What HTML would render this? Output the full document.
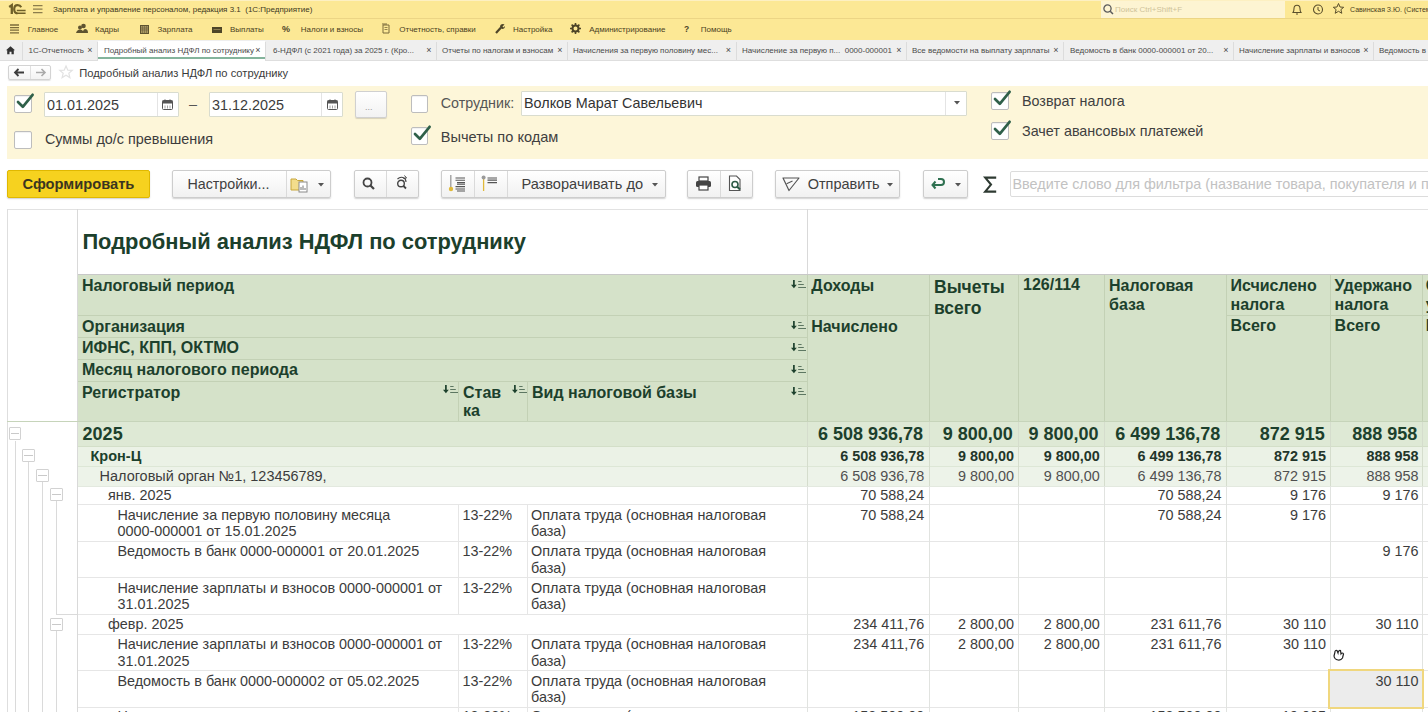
<!DOCTYPE html>
<html><head><meta charset="utf-8">
<style>
*{box-sizing:border-box;margin:0;padding:0}
html,body{width:1428px;height:712px;overflow:hidden;background:#fff;font-family:"Liberation Sans",sans-serif;color:#333}
body{position:relative}
.a{position:absolute;white-space:nowrap}
svg{position:absolute;overflow:visible}
</style></head><body>

<div class="a" style="left:0px;top:0px;width:1428px;height:18.5px;background:#fce895"></div>
<div class="a" style="left:0px;top:0px;width:1428px;height:1px;background:#fdf0c2"></div>
<div class="a" style="left:0px;top:18px;width:1428px;height:1px;background:#ecd585"></div>
<div class="a" style="left:0px;top:19.3px;width:1428px;height:21.5px;background:#fce895"></div>
<svg style="left:8px;top:3.5px" width="18" height="11" viewBox="0 0 18 11"><path d="M1.2 3 L3.8 1.2 V10" fill="none" stroke="#6e5f28" stroke-width="2.3"/><path d="M13.2 3.2 Q12.2 1.2 9.6 1.2 Q6.2 1.2 6.2 5.3 Q6.2 9.2 9.4 9.4" fill="none" stroke="#6e5f28" stroke-width="2.2"/><path d="M8.8 6.6 H17.6 M8.8 9.2 H17.6" stroke="#6e5f28" stroke-width="1.5"/></svg>
<svg style="left:33px;top:5px" width="10" height="9"><path d="M0 .7H9.5M0 4.2H9.5M0 7.7H9.5" stroke="#8c7d4c" stroke-width="1.2"/></svg>
<div class="a" style="left:53px;top:6px;font-size:8px;line-height:8px;color:#40381e;font-weight:400;">Зарплата и управление персоналом, редакция 3.1&nbsp; (1С:Предприятие)</div>
<div class="a" style="left:1101px;top:0.5px;width:184px;height:17.5px;background:#fdf4d2"></div>
<svg style="left:1103px;top:4px" width="11" height="11"><circle cx="4.5" cy="4.5" r="3.6" fill="none" stroke="#5a5a5a" stroke-width="1.3"/><path d="M7.2 7.2L10 10" stroke="#5a5a5a" stroke-width="1.5"/></svg>
<div class="a" style="left:1115px;top:6px;font-size:8px;line-height:8px;color:#cfc39a;font-weight:400;">Поиск Ctrl+Shift+F</div>
<svg style="left:1291px;top:3px" width="12" height="13"><path d="M2 9.5 Q3 8 3 5.5 Q3 2.2 6 2.2 Q9 2.2 9 5.5 Q9 8 10 9.5 Z" fill="none" stroke="#5a4f2c" stroke-width="1.1"/><path d="M5 11h2" stroke="#5a4f2c" stroke-width="1.2"/></svg>
<svg style="left:1312px;top:3px" width="13" height="13"><circle cx="6" cy="6.5" r="4.5" fill="none" stroke="#5a4f2c" stroke-width="1.1"/><path d="M6 4v3l2 1" fill="none" stroke="#5a4f2c" stroke-width="1"/></svg>
<svg style="left:1332px;top:2px" width="13" height="13"><path d="M6.5 1.5 L8 5 L11.7 5.3 L8.9 7.6 L9.8 11.3 L6.5 9.3 L3.2 11.3 L4.1 7.6 L1.3 5.3 L5 5 Z" fill="none" stroke="#5a4f2c" stroke-width="1"/></svg>
<div class="a" style="left:1350px;top:6px;font-size:7px;line-height:7px;color:#4a4122;font-weight:400;">Савинская З.Ю. (Система</div>
<svg style="left:10px;top:24px" width="10" height="10"><path d="M0 1H9M0 3.6H9M0 6.2H9M0 8.8H9" stroke="#7b6b3a" stroke-width="1.3"/></svg>
<div class="a" style="left:27.7px;top:26px;font-size:8px;line-height:8px;color:#4a4122;font-weight:400;">Главное</div>
<svg style="left:76px;top:23px" width="12" height="11"><circle cx="7.5" cy="3" r="2.3" fill="#5e5330"/><circle cx="4" cy="4.5" r="2" fill="#5e5330"/><path d="M0 10 Q1 6.5 4 6.5 Q6 6.5 7 8 Q8 6 9 6 Q12 6 12 10Z" fill="#5e5330"/></svg>
<div class="a" style="left:95px;top:26px;font-size:8px;line-height:8px;color:#4a4122;font-weight:400;">Кадры</div>
<svg style="left:140px;top:25px" width="9" height="9"><rect x=".5" y=".5" width="8" height="8" fill="#a89860" stroke="#5e5330"/><path d="M2.5 1v7M4.5 1v7M6.5 1v7M1 3h7M1 5h7" stroke="#6b6040" stroke-width=".6"/></svg>
<div class="a" style="left:157.5px;top:26px;font-size:8px;line-height:8px;color:#4a4122;font-weight:400;">Зарплата</div>
<svg style="left:212px;top:26.5px" width="10" height="6"><rect x="0" y="0" width="10" height="6" fill="#4e4528"/><path d="M1.5 2.5h7" stroke="#9c8c5a" stroke-width=".8"/></svg>
<div class="a" style="left:230px;top:26px;font-size:8px;line-height:8px;color:#4a4122;font-weight:400;">Выплаты</div>
<div class="a" style="left:282px;top:25px;font-size:9px;line-height:9px;color:#4e4528;font-weight:700;">%</div>
<div class="a" style="left:300.8px;top:26px;font-size:8px;line-height:8px;color:#4a4122;font-weight:400;">Налоги и взносы</div>
<svg style="left:381px;top:23px" width="9" height="11"><path d="M2 2h6v8H2z M1 1h5" fill="none" stroke="#7b6b3a" stroke-width="1"/><path d="M3.5 4.5h3M3.5 6.5h3" stroke="#7b6b3a" stroke-width=".8"/></svg>
<div class="a" style="left:399.3px;top:26px;font-size:8px;line-height:8px;color:#4a4122;font-weight:400;">Отчетность, справки</div>
<svg style="left:495px;top:23px" width="10" height="11"><path d="M1 10 L6 4.5" stroke="#4e4528" stroke-width="2.2"/><path d="M5 4 Q5 1 8 1 L9.5 1.5 L7.5 3.5 L8.5 4.5 L10 3 Q10 6 7 6Z" fill="#4e4528"/></svg>
<div class="a" style="left:513px;top:26px;font-size:8px;line-height:8px;color:#4a4122;font-weight:400;">Настройка</div>
<svg style="left:570px;top:23px" width="11" height="11"><circle cx="5.5" cy="5.5" r="3" fill="none" stroke="#4e4528" stroke-width="2"/><path d="M5.5 0v2.5M5.5 8.5V11M0 5.5h2.5M8.5 5.5H11M1.6 1.6l1.8 1.8M7.6 7.6l1.8 1.8M1.6 9.4l1.8-1.8M7.6 3.4l1.8-1.8" stroke="#4e4528" stroke-width="1.6"/></svg>
<div class="a" style="left:589.2px;top:26px;font-size:8px;line-height:8px;color:#4a4122;font-weight:400;">Администрирование</div>
<div class="a" style="left:684px;top:25px;font-size:8.5px;line-height:8.5px;color:#4e4528;font-weight:700;">?</div>
<div class="a" style="left:700.8px;top:26px;font-size:8px;line-height:8px;color:#4a4122;font-weight:400;">Помощь</div>
<div class="a" style="left:0px;top:40.3px;width:1428px;height:20px;background:#efefef"></div>
<div class="a" style="left:0px;top:60.2px;width:1428px;height:1px;background:#dedede"></div>
<div class="a" style="left:21.5px;top:41.5px;width:1px;height:18.5px;background:#dcdcdc"></div>
<div class="a" style="left:97px;top:41.5px;width:1px;height:18.5px;background:#dcdcdc"></div>
<div class="a" style="left:28.5px;top:47px;font-size:8px;line-height:8px;color:#4a4a4a;font-weight:400;">1С-Отчетность</div>
<div class="a" style="left:87.2px;top:46px;font-size:9px;line-height:9px;color:#4a4a4a;font-weight:400;">×</div>
<div class="a" style="left:97.5px;top:40.8px;width:167.5px;height:19.8px;background:#fff"></div>
<div class="a" style="left:97.5px;top:57px;width:167.5px;height:2px;background:#84b49c"></div>
<div class="a" style="left:265px;top:41.5px;width:1px;height:18.5px;background:#dcdcdc"></div>
<div class="a" style="left:104px;top:47px;font-size:8px;line-height:8px;color:#4a4a4a;font-weight:400;">Подробный анализ НДФЛ по сотруднику</div>
<div class="a" style="left:255.2px;top:46px;font-size:9px;line-height:9px;color:#4a4a4a;font-weight:400;">×</div>
<div class="a" style="left:436px;top:41.5px;width:1px;height:18.5px;background:#dcdcdc"></div>
<div class="a" style="left:273px;top:47px;font-size:8px;line-height:8px;color:#4a4a4a;font-weight:400;">6-НДФЛ (с 2021 года) за 2025 г. (Кро...</div>
<div class="a" style="left:426.2px;top:46px;font-size:9px;line-height:9px;color:#4a4a4a;font-weight:400;">×</div>
<div class="a" style="left:567px;top:41.5px;width:1px;height:18.5px;background:#dcdcdc"></div>
<div class="a" style="left:442px;top:47px;font-size:8px;line-height:8px;color:#4a4a4a;font-weight:400;">Отчеты по налогам и взносам</div>
<div class="a" style="left:557.2px;top:46px;font-size:9px;line-height:9px;color:#4a4a4a;font-weight:400;">×</div>
<div class="a" style="left:735.6px;top:41.5px;width:1px;height:18.5px;background:#dcdcdc"></div>
<div class="a" style="left:573px;top:47px;font-size:8px;line-height:8px;color:#4a4a4a;font-weight:400;">Начисления за первую половину мес...</div>
<div class="a" style="left:725.8000000000001px;top:46px;font-size:9px;line-height:9px;color:#4a4a4a;font-weight:400;">×</div>
<div class="a" style="left:906px;top:41.5px;width:1px;height:18.5px;background:#dcdcdc"></div>
<div class="a" style="left:742px;top:47px;font-size:8px;line-height:8px;color:#4a4a4a;font-weight:400;">Начисление за первую п...&nbsp; 0000-000001</div>
<div class="a" style="left:896.2px;top:46px;font-size:9px;line-height:9px;color:#4a4a4a;font-weight:400;">×</div>
<div class="a" style="left:1063px;top:41.5px;width:1px;height:18.5px;background:#dcdcdc"></div>
<div class="a" style="left:912px;top:47px;font-size:8px;line-height:8px;color:#4a4a4a;font-weight:400;">Все ведомости на выплату зарплаты</div>
<div class="a" style="left:1053.2px;top:46px;font-size:9px;line-height:9px;color:#4a4a4a;font-weight:400;">×</div>
<div class="a" style="left:1233px;top:41.5px;width:1px;height:18.5px;background:#dcdcdc"></div>
<div class="a" style="left:1070px;top:47px;font-size:8px;line-height:8px;color:#4a4a4a;font-weight:400;">Ведомость в банк 0000-000001 от 20...</div>
<div class="a" style="left:1223.2px;top:46px;font-size:9px;line-height:9px;color:#4a4a4a;font-weight:400;">×</div>
<div class="a" style="left:1373px;top:41.5px;width:1px;height:18.5px;background:#dcdcdc"></div>
<div class="a" style="left:1239px;top:47px;font-size:8px;line-height:8px;color:#4a4a4a;font-weight:400;">Начисление зарплаты и взносов</div>
<div class="a" style="left:1363.2px;top:46px;font-size:9px;line-height:9px;color:#4a4a4a;font-weight:400;">×</div>
<div class="a" style="left:1500px;top:41.5px;width:1px;height:18.5px;background:#dcdcdc"></div>
<div class="a" style="left:1379px;top:47px;font-size:8px;line-height:8px;color:#4a4a4a;font-weight:400;">Ведомость в банк 0000-000002 от 05.02.2025</div>
<svg style="left:6px;top:45.5px" width="9" height="9"><path d="M0 4.2 L4.5 0.3 L9 4.2 L7.8 4.2 L7.8 8.3 L5.5 8.3 L5.5 5.8 L3.5 5.8 L3.5 8.3 L1.2 8.3 L1.2 4.2Z" fill="#333"/></svg>
<div class="a" style="left:7.5px;top:65.4px;width:43.5px;height:14.3px;background:linear-gradient(#fff,#f3f3f3);border:1px solid #d3d3d3;border-radius:2px;box-shadow:0 1px 1px rgba(0,0,0,.12)"></div>
<div class="a" style="left:30px;top:66px;width:1px;height:13px;background:#e0e0e0"></div>
<svg style="left:13px;top:68px" width="12" height="9"><path d="M11 4.5H2M5.5 1L2 4.5L5.5 8" fill="none" stroke="#3c3c3c" stroke-width="1.8"/></svg>
<svg style="left:35px;top:68px" width="12" height="9"><path d="M1 4.5H10M6.5 1L10 4.5L6.5 8" fill="none" stroke="#aaaaaa" stroke-width="1.6"/></svg>
<svg style="left:59px;top:65px" width="14" height="14"><path d="M7 1 L8.8 5.2 L13.2 5.4 L9.8 8.2 L10.9 12.6 L7 10.2 L3.1 12.6 L4.2 8.2 L0.8 5.4 L5.2 5.2 Z" fill="none" stroke="#e2e2e2" stroke-width="1.2"/></svg>
<div class="a" style="left:79.3px;top:68px;font-size:11.15px;line-height:11.15px;color:#3a3a3a;font-weight:400;">Подробный анализ НДФЛ по сотруднику</div>
<div class="a" style="left:7px;top:85.5px;width:1421px;height:73.8px;background:#fdf6d9"></div>
<div class="a" style="left:14px;top:95px;width:17.5px;height:18px;background:#fff;border:1px solid #bdbdbd;border-radius:2px;box-shadow:inset 0 1px 1px rgba(0,0,0,.06)"></div>
<svg style="left:14px;top:92px" width="22" height="22"><path d="M4 10 L8.8 14.8 L18.6 2.8" fill="none" stroke="#2f6049" stroke-width="2.7" stroke-linecap="round" stroke-linejoin="round"/></svg>
<div class="a" style="left:43.8px;top:92.3px;width:134.8px;height:25.200000000000003px;background:#fff;border:1px solid #d9dccf;border-radius:1px"></div>
<div class="a" style="left:156.5px;top:93.3px;width:1px;height:23.200000000000003px;background:#e4e4e4"></div>
<div class="a" style="left:47px;top:98px;font-size:14.4px;line-height:14.4px;color:#3c3c3c;font-weight:400;">01.01.2025</div>
<svg style="left:162px;top:99px" width="11" height="11"><rect x=".5" y="1.5" width="10" height="9" rx="1" fill="#fff" stroke="#555" stroke-width="1"/><rect x=".5" y="1.5" width="10" height="3" fill="#555"/><path d="M3 0.5v2M8 0.5v2" stroke="#555" stroke-width="1.2"/><path d="M3 6.5v3M5.5 6.5v3M8 6.5v3" stroke="#999" stroke-width=".9"/></svg>
<div class="a" style="left:189px;top:97px;font-size:14.4px;line-height:14.4px;color:#555;font-weight:400;">–</div>
<div class="a" style="left:209px;top:92.3px;width:134px;height:25.200000000000003px;background:#fff;border:1px solid #d9dccf;border-radius:1px"></div>
<div class="a" style="left:321px;top:93.3px;width:1px;height:23.200000000000003px;background:#e4e4e4"></div>
<div class="a" style="left:212px;top:98px;font-size:14.4px;line-height:14.4px;color:#3c3c3c;font-weight:400;">31.12.2025</div>
<svg style="left:327px;top:99px" width="11" height="11"><rect x=".5" y="1.5" width="10" height="9" rx="1" fill="#fff" stroke="#555" stroke-width="1"/><rect x=".5" y="1.5" width="10" height="3" fill="#555"/><path d="M3 0.5v2M8 0.5v2" stroke="#555" stroke-width="1.2"/><path d="M3 6.5v3M5.5 6.5v3M8 6.5v3" stroke="#999" stroke-width=".9"/></svg>
<div class="a" style="left:354.7px;top:90.5px;width:32.3px;height:27.3px;background:linear-gradient(#fff,#f2f2f2);border:1px solid #d0d0d0;border-radius:2px;box-shadow:0 1px 1px rgba(0,0,0,.15)"></div>
<div class="a" style="left:365px;top:103px;font-size:9px;line-height:9px;color:#9a9a9a;font-weight:400;">...</div>
<div class="a" style="left:14px;top:130.5px;width:17.5px;height:18px;background:#fff;border:1px solid #bdbdbd;border-radius:2px;box-shadow:inset 0 1px 1px rgba(0,0,0,.06)"></div>
<div class="a" style="left:44.9px;top:132px;font-size:14.4px;line-height:14.4px;color:#3c3c3c;font-weight:400;">Суммы до/с превышения</div>
<div class="a" style="left:410.5px;top:94.5px;width:17.5px;height:18px;background:#fff;border:1px solid #bdbdbd;border-radius:2px;box-shadow:inset 0 1px 1px rgba(0,0,0,.06)"></div>
<div class="a" style="left:440.8px;top:96px;font-size:14.3px;line-height:14.3px;color:#555;font-weight:400;">Сотрудник:</div>
<div class="a" style="left:520.6px;top:90.5px;width:446.6px;height:25.200000000000003px;background:#fff;border:1px solid #d9dccf;border-radius:1px"></div>
<div class="a" style="left:945.4px;top:91.5px;width:1px;height:23.200000000000003px;background:#e4e4e4"></div>
<div class="a" style="left:524px;top:96px;font-size:14.36px;line-height:14.36px;color:#333;font-weight:400;">Волков Марат Савельевич</div>
<svg style="left:954px;top:101px" width="6" height="4"><path d="M0 0H6L3 3.5Z" fill="#555"/></svg>
<div class="a" style="left:410.5px;top:127px;width:17.5px;height:18px;background:#fff;border:1px solid #bdbdbd;border-radius:2px;box-shadow:inset 0 1px 1px rgba(0,0,0,.06)"></div>
<svg style="left:410.5px;top:124px" width="22" height="22"><path d="M4 10 L8.8 14.8 L18.6 2.8" fill="none" stroke="#2f6049" stroke-width="2.7" stroke-linecap="round" stroke-linejoin="round"/></svg>
<div class="a" style="left:440.8px;top:130px;font-size:14.57px;line-height:14.57px;color:#404040;font-weight:400;">Вычеты по кодам</div>
<div class="a" style="left:991px;top:91.5px;width:17.5px;height:18px;background:#fff;border:1px solid #bdbdbd;border-radius:2px;box-shadow:inset 0 1px 1px rgba(0,0,0,.06)"></div>
<svg style="left:991px;top:88.5px" width="22" height="22"><path d="M4 10 L8.8 14.8 L18.6 2.8" fill="none" stroke="#2f6049" stroke-width="2.7" stroke-linecap="round" stroke-linejoin="round"/></svg>
<div class="a" style="left:1022px;top:94px;font-size:14.3px;line-height:14.3px;color:#404040;font-weight:400;">Возврат налога</div>
<div class="a" style="left:991px;top:122px;width:17.5px;height:18px;background:#fff;border:1px solid #bdbdbd;border-radius:2px;box-shadow:inset 0 1px 1px rgba(0,0,0,.06)"></div>
<svg style="left:991px;top:119px" width="22" height="22"><path d="M4 10 L8.8 14.8 L18.6 2.8" fill="none" stroke="#2f6049" stroke-width="2.7" stroke-linecap="round" stroke-linejoin="round"/></svg>
<div class="a" style="left:1022px;top:124px;font-size:14.36px;line-height:14.36px;color:#404040;font-weight:400;">Зачет авансовых платежей</div>
<div class="a" style="left:6.8px;top:170.2px;width:143.2px;height:27.7px;background:#f6d21f;border:1px solid #e0b800;border-radius:2px;box-shadow:0 1px 1.5px rgba(0,0,0,.18)"></div>
<div class="a" style="left:22.5px;top:177px;font-size:14.7px;line-height:14.7px;color:#3a3520;font-weight:700;">Сформировать</div>
<div class="a" style="left:171.6px;top:170.2px;width:159.70000000000002px;height:27.700000000000017px;background:linear-gradient(#fff,#f1f1f1);border:1px solid #cdcdcd;border-radius:2px;box-shadow:0 1px 1.5px rgba(0,0,0,.18);"></div>
<div class="a" style="left:285.7px;top:171px;width:1px;height:26px;background:#dadada"></div>
<div class="a" style="left:187.4px;top:177px;font-size:14.3px;line-height:14.3px;color:#404040;font-weight:400;">Настройки...</div>
<svg style="left:290px;top:175px" width="22" height="18"><path d="M1 4 H6 L7.5 5.5 H13 V15 H1Z" fill="#f3dd8c" stroke="#c8a63a" stroke-width="1"/><rect x="9" y="7" width="8" height="10" fill="#fff" stroke="#8a8a8a" stroke-width="1"/><path d="M11 12v3M13 10.5v4.5M15 13v2" stroke="#666" stroke-width=".9"/></svg>
<svg style="left:318px;top:183px" width="6" height="4"><path d="M0 0H6L3 3.5Z" fill="#555"/></svg>
<div class="a" style="left:353.5px;top:170.2px;width:65.0px;height:27.700000000000017px;background:linear-gradient(#fff,#f1f1f1);border:1px solid #cdcdcd;border-radius:2px;box-shadow:0 1px 1.5px rgba(0,0,0,.18);"></div>
<div class="a" style="left:386px;top:171px;width:1px;height:26px;background:#dadada"></div>
<svg style="left:362px;top:177px" width="14" height="14"><circle cx="5.5" cy="5.5" r="4" fill="none" stroke="#444" stroke-width="1.8"/><path d="M8.5 8.5 L12 12" stroke="#444" stroke-width="2.2"/></svg>
<svg style="left:395px;top:175px" width="14" height="16"><path d="M2.5 4 Q5 1.5 8 2.5 Q11 3.5 11 7" fill="none" stroke="#444" stroke-width="1.1"/><path d="M9.5 0.5 L11.5 3 L8.5 3.5" fill="none" stroke="#444" stroke-width="1"/><circle cx="6" cy="8.5" r="3.3" fill="none" stroke="#444" stroke-width="1.4"/><path d="M8.5 11 L11 13.5" stroke="#444" stroke-width="1.8"/></svg>
<div class="a" style="left:441px;top:170.2px;width:224.60000000000002px;height:27.700000000000017px;background:linear-gradient(#fff,#f1f1f1);border:1px solid #cdcdcd;border-radius:2px;box-shadow:0 1px 1.5px rgba(0,0,0,.18);"></div>
<div class="a" style="left:473.9px;top:171px;width:1px;height:26px;background:#dadada"></div>
<div class="a" style="left:507.2px;top:171px;width:1px;height:26px;background:#dadada"></div>
<svg style="left:446px;top:174px" width="22" height="20"><path d="M4.8 1 V14" stroke="#9a9a9a" stroke-width="1.3"/><circle cx="5" cy="15" r="2.2" fill="#e0b93a"/><path d="M9.5 4H19M9.5 6.2H19M11 8.6H19M11 10.2H19M9.5 12.6H19M9.5 15H19M11 17H19" stroke="#555" stroke-width="1.1"/></svg>
<svg style="left:479px;top:174px" width="22" height="20"><path d="M4.6 5 V17" stroke="#e0b93a" stroke-width="1.3"/><circle cx="4.6" cy="3.5" r="2" fill="#9a9a9a"/><path d="M8.5 4H18M8.5 6.2H18M8.5 8.6H18" stroke="#555" stroke-width="1.2"/></svg>
<div class="a" style="left:521.4px;top:177px;font-size:14.6px;line-height:14.6px;color:#404040;font-weight:400;">Разворачивать до</div>
<svg style="left:652px;top:183px" width="6" height="4"><path d="M0 0H6L3 3.5Z" fill="#555"/></svg>
<div class="a" style="left:687px;top:170.2px;width:66px;height:27.700000000000017px;background:linear-gradient(#fff,#f1f1f1);border:1px solid #cdcdcd;border-radius:2px;box-shadow:0 1px 1.5px rgba(0,0,0,.18);"></div>
<div class="a" style="left:720.4px;top:171px;width:1px;height:26px;background:#dadada"></div>
<svg style="left:695px;top:176px" width="17" height="15"><rect x="4" y="1" width="9" height="4" fill="#fff" stroke="#444" stroke-width="1.2"/><rect x="1" y="5" width="15" height="6" rx="1.5" fill="#444"/><rect x="4" y="9" width="9" height="5" fill="#fff" stroke="#444" stroke-width="1.2"/></svg>
<svg style="left:728px;top:175px" width="16" height="17"><path d="M1.5 1 H8.5 L12 4.5 V15.5 H1.5Z" fill="#fff" stroke="#555" stroke-width="1.1"/><circle cx="7" cy="9.5" r="3" fill="none" stroke="#2d5a45" stroke-width="1.6"/><path d="M9 11.5 L12 14.5" stroke="#2d5a45" stroke-width="2"/></svg>
<div class="a" style="left:775.2px;top:170.2px;width:125.09999999999991px;height:27.700000000000017px;background:linear-gradient(#fff,#f1f1f1);border:1px solid #cdcdcd;border-radius:2px;box-shadow:0 1px 1.5px rgba(0,0,0,.18);"></div>
<svg style="left:780px;top:175px" width="22" height="18"><path d="M3 3 H19 L9 15.5 Z" fill="none" stroke="#555" stroke-width="1.2" stroke-linejoin="round"/><path d="M6.6 8.7 L12.5 6" stroke="#555" stroke-width="1.1"/></svg>
<div class="a" style="left:807.7px;top:177px;font-size:14.5px;line-height:14.5px;color:#404040;font-weight:400;">Отправить</div>
<svg style="left:887px;top:183px" width="6" height="4"><path d="M0 0H6L3 3.5Z" fill="#555"/></svg>
<div class="a" style="left:922.7px;top:170.2px;width:45.5px;height:27.700000000000017px;background:linear-gradient(#fff,#f1f1f1);border:1px solid #cdcdcd;border-radius:2px;box-shadow:0 1px 1.5px rgba(0,0,0,.18);"></div>
<svg style="left:930px;top:177px" width="16" height="12"><path d="M8 2 H11 Q14 2 14 5 Q14 8 11 8 H3" fill="none" stroke="#2e7050" stroke-width="2"/><path d="M5.5 4.5 L2.5 8 L5.5 11.5" fill="none" stroke="#2e7050" stroke-width="2"/></svg>
<svg style="left:955px;top:183px" width="6" height="4"><path d="M0 0H6L3 3.5Z" fill="#555"/></svg>
<svg style="left:982px;top:175px" width="17" height="19"><path d="M14.2 2.6 H3.2 L9 9.6 L3.2 16.6 H14.2" fill="none" stroke="#2e3a32" stroke-width="2.1" stroke-linejoin="miter"/></svg>
<div class="a" style="left:1010.3px;top:171px;width:420px;height:26.2px;background:#fff;border:1px solid #dcdcdc;border-radius:2px"></div>
<div class="a" style="left:1012.5px;top:177px;font-size:14.4px;line-height:14.4px;color:#c2c2c2;font-weight:400;">Введите слово для фильтра (название товара, покупателя и п</div>
<div class="a" style="left:7px;top:208.5px;width:1421px;height:1px;background:#e2e2e2"></div>
<div class="a" style="left:7px;top:208.5px;width:1px;height:504px;background:#dedede"></div>
<div class="a" style="left:77px;top:209px;width:1px;height:503px;background:#d9d9d9"></div>
<div class="a" style="left:806.6px;top:209px;width:1px;height:66px;background:#d9d9d9"></div>
<div class="a" style="left:82.4px;top:231px;font-size:21.9px;line-height:21.9px;color:#1c402c;font-weight:700;">Подробный анализ НДФЛ по сотруднику</div>
<div class="a" style="left:77.5px;top:274.6px;width:1350.5px;height:147.0px;background:#d5e2c9"></div>
<div class="a" style="left:77.5px;top:274.1px;width:1350.5px;height:1.2px;background:#c8c8c8"></div>
<div class="a" style="left:77.5px;top:315px;width:729.5px;height:1px;background:#c3d1b5"></div>
<div class="a" style="left:807px;top:315px;width:121.5px;height:1px;background:#c3d1b5"></div>
<div class="a" style="left:1225.5px;top:315px;width:202.5px;height:1px;background:#c3d1b5"></div>
<div class="a" style="left:77.5px;top:337px;width:729.5px;height:1px;background:#c3d1b5"></div>
<div class="a" style="left:77.5px;top:358.6px;width:729.5px;height:1px;background:#c3d1b5"></div>
<div class="a" style="left:77.5px;top:381.2px;width:729.5px;height:1px;background:#c3d1b5"></div>
<div class="a" style="left:458.4px;top:381.5px;width:1px;height:40.10000000000002px;background:#c3d1b5"></div>
<div class="a" style="left:526.6px;top:381.5px;width:1px;height:40.10000000000002px;background:#c3d1b5"></div>
<div class="a" style="left:806.6px;top:274.6px;width:1px;height:147.0px;background:#c3d1b5"></div>
<div class="a" style="left:928.5px;top:274.6px;width:1px;height:147.0px;background:#c3d1b5"></div>
<div class="a" style="left:1018.3px;top:274.6px;width:1px;height:147.0px;background:#c3d1b5"></div>
<div class="a" style="left:1104px;top:274.6px;width:1px;height:147.0px;background:#c3d1b5"></div>
<div class="a" style="left:1225.5px;top:274.6px;width:1px;height:147.0px;background:#c3d1b5"></div>
<div class="a" style="left:1329.5px;top:274.6px;width:1px;height:147.0px;background:#c3d1b5"></div>
<div class="a" style="left:1422.2px;top:274.6px;width:1px;height:147.0px;background:#c3d1b5"></div>
<div class="a" style="left:7px;top:421.0px;width:1421px;height:1px;background:#c6d4ba"></div>
<svg style="left:791px;top:280px" width="16" height="10"><path d="M2.9 0 V5.5" stroke="#1c402c" stroke-width="1.7"/><path d="M0 4.8 L2.9 8.3 L5.8 4.8Z" fill="#1c402c"/><path d="M7.2 1.5h3.4M7.2 4.5h5.6M7.2 7.5h7.8" stroke="#5d7762" stroke-width="1"/></svg>
<svg style="left:791px;top:321px" width="16" height="10"><path d="M2.9 0 V5.5" stroke="#1c402c" stroke-width="1.7"/><path d="M0 4.8 L2.9 8.3 L5.8 4.8Z" fill="#1c402c"/><path d="M7.2 1.5h3.4M7.2 4.5h5.6M7.2 7.5h7.8" stroke="#5d7762" stroke-width="1"/></svg>
<svg style="left:791px;top:343px" width="16" height="10"><path d="M2.9 0 V5.5" stroke="#1c402c" stroke-width="1.7"/><path d="M0 4.8 L2.9 8.3 L5.8 4.8Z" fill="#1c402c"/><path d="M7.2 1.5h3.4M7.2 4.5h5.6M7.2 7.5h7.8" stroke="#5d7762" stroke-width="1"/></svg>
<svg style="left:791px;top:365px" width="16" height="10"><path d="M2.9 0 V5.5" stroke="#1c402c" stroke-width="1.7"/><path d="M0 4.8 L2.9 8.3 L5.8 4.8Z" fill="#1c402c"/><path d="M7.2 1.5h3.4M7.2 4.5h5.6M7.2 7.5h7.8" stroke="#5d7762" stroke-width="1"/></svg>
<svg style="left:791px;top:387px" width="16" height="10"><path d="M2.9 0 V5.5" stroke="#1c402c" stroke-width="1.7"/><path d="M0 4.8 L2.9 8.3 L5.8 4.8Z" fill="#1c402c"/><path d="M7.2 1.5h3.4M7.2 4.5h5.6M7.2 7.5h7.8" stroke="#5d7762" stroke-width="1"/></svg>
<svg style="left:443px;top:385px" width="16" height="10"><path d="M2.9 0 V5.5" stroke="#1c402c" stroke-width="1.7"/><path d="M0 4.8 L2.9 8.3 L5.8 4.8Z" fill="#1c402c"/><path d="M7.2 1.5h3.4M7.2 4.5h5.6M7.2 7.5h7.8" stroke="#5d7762" stroke-width="1"/></svg>
<svg style="left:511.5px;top:385px" width="16" height="10"><path d="M2.9 0 V5.5" stroke="#1c402c" stroke-width="1.7"/><path d="M0 4.8 L2.9 8.3 L5.8 4.8Z" fill="#1c402c"/><path d="M7.2 1.5h3.4M7.2 4.5h5.6M7.2 7.5h7.8" stroke="#5d7762" stroke-width="1"/></svg>
<div class="a" style="left:82px;top:278px;font-size:16px;line-height:16px;color:#1c402c;font-weight:700;">Налоговый период</div>
<div class="a" style="left:82px;top:319px;font-size:16px;line-height:16px;color:#1c402c;font-weight:700;">Организация</div>
<div class="a" style="left:82px;top:340px;font-size:16px;line-height:16px;color:#1c402c;font-weight:700;">ИФНС, КПП, ОКТМО</div>
<div class="a" style="left:82px;top:362px;font-size:16px;line-height:16px;color:#1c402c;font-weight:700;">Месяц налогового периода</div>
<div class="a" style="left:82px;top:385px;font-size:16px;line-height:16px;color:#1c402c;font-weight:700;">Регистратор</div>
<div class="a" style="left:463px;top:385px;font-size:16px;line-height:16px;color:#1c402c;font-weight:700;">Став</div>
<div class="a" style="left:463px;top:403px;font-size:16px;line-height:16px;color:#1c402c;font-weight:700;">ка</div>
<div class="a" style="left:532px;top:385px;font-size:16px;line-height:16px;color:#1c402c;font-weight:700;">Вид налоговой базы</div>
<div class="a" style="left:811.3px;top:278px;font-size:16px;line-height:16px;color:#1c402c;font-weight:700;">Доходы</div>
<div class="a" style="left:811.3px;top:319px;font-size:16px;line-height:16px;color:#1c402c;font-weight:700;">Начислено</div>
<div class="a" style="left:934px;top:279px;font-size:17.5px;line-height:17.5px;color:#1c402c;font-weight:700;">Вычеты</div>
<div class="a" style="left:934px;top:300px;font-size:17.5px;line-height:17.5px;color:#1c402c;font-weight:700;">всего</div>
<div class="a" style="left:1023px;top:277px;font-size:16px;line-height:16px;color:#1c402c;font-weight:700;">126/114</div>
<div class="a" style="left:1109px;top:278px;font-size:16px;line-height:16px;color:#1c402c;font-weight:700;">Налоговая</div>
<div class="a" style="left:1109px;top:297px;font-size:16px;line-height:16px;color:#1c402c;font-weight:700;">база</div>
<div class="a" style="left:1230.5px;top:278px;font-size:16px;line-height:16px;color:#1c402c;font-weight:700;">Исчислено</div>
<div class="a" style="left:1230.5px;top:297px;font-size:16px;line-height:16px;color:#1c402c;font-weight:700;">налога</div>
<div class="a" style="left:1230.5px;top:318px;font-size:16px;line-height:16px;color:#1c402c;font-weight:700;">Всего</div>
<div class="a" style="left:1334.6px;top:278px;font-size:16px;line-height:16px;color:#1c402c;font-weight:700;">Удержано</div>
<div class="a" style="left:1334.6px;top:297px;font-size:16px;line-height:16px;color:#1c402c;font-weight:700;">налога</div>
<div class="a" style="left:1334.6px;top:318px;font-size:16px;line-height:16px;color:#1c402c;font-weight:700;">Всего</div>
<div class="a" style="left:1425.8px;top:278px;font-size:16px;line-height:16px;color:#1c402c;font-weight:700;">Сумма</div>
<div class="a" style="left:1425.8px;top:297px;font-size:16px;line-height:16px;color:#1c402c;font-weight:700;">удерж.</div>
<div class="a" style="left:1425.8px;top:318px;font-size:16px;line-height:16px;color:#1c402c;font-weight:700;">Всего</div>
<div class="a" style="left:77.5px;top:421.5px;width:1350.5px;height:24.69999999999999px;background:#dee9d5"></div>
<div class="a" style="left:77.5px;top:446.2px;width:1350.5px;height:19.80000000000001px;background:#ebf2e6"></div>
<div class="a" style="left:77.5px;top:466px;width:1350.5px;height:19.600000000000023px;background:#edf3e9"></div>
<div class="a" style="left:77.5px;top:446.2px;width:1350.5px;height:1px;background:#d3dfc8"></div>
<div class="a" style="left:77.5px;top:466px;width:1350.5px;height:1px;background:#dde7d6"></div>
<div class="a" style="left:77.5px;top:485.6px;width:1350.5px;height:1px;background:#e3e9df"></div>
<div class="a" style="left:77.5px;top:504.4px;width:1350.5px;height:1px;background:#e6e6e6"></div>
<div class="a" style="left:77.5px;top:540.6px;width:1350.5px;height:1px;background:#e6e6e6"></div>
<div class="a" style="left:77.5px;top:577.3px;width:1350.5px;height:1px;background:#e6e6e6"></div>
<div class="a" style="left:77.5px;top:613.9px;width:1350.5px;height:1px;background:#e6e6e6"></div>
<div class="a" style="left:77.5px;top:633.5px;width:1350.5px;height:1px;background:#e6e6e6"></div>
<div class="a" style="left:77.5px;top:670.1px;width:1350.5px;height:1px;background:#e6e6e6"></div>
<div class="a" style="left:77.5px;top:706.9px;width:1350.5px;height:1px;background:#e6e6e6"></div>
<div class="a" style="left:806.6px;top:421.6px;width:1px;height:64.0px;background:#d5ddcd"></div>
<div class="a" style="left:806.6px;top:485.6px;width:1px;height:226.39999999999998px;background:#e1e3e0"></div>
<div class="a" style="left:928.5px;top:421.6px;width:1px;height:64.0px;background:#d5ddcd"></div>
<div class="a" style="left:928.5px;top:485.6px;width:1px;height:226.39999999999998px;background:#e1e3e0"></div>
<div class="a" style="left:1018.3px;top:421.6px;width:1px;height:64.0px;background:#d5ddcd"></div>
<div class="a" style="left:1018.3px;top:485.6px;width:1px;height:226.39999999999998px;background:#e1e3e0"></div>
<div class="a" style="left:1104px;top:421.6px;width:1px;height:64.0px;background:#d5ddcd"></div>
<div class="a" style="left:1104px;top:485.6px;width:1px;height:226.39999999999998px;background:#e1e3e0"></div>
<div class="a" style="left:1225.5px;top:421.6px;width:1px;height:64.0px;background:#d5ddcd"></div>
<div class="a" style="left:1225.5px;top:485.6px;width:1px;height:226.39999999999998px;background:#e1e3e0"></div>
<div class="a" style="left:1329.5px;top:421.6px;width:1px;height:64.0px;background:#d5ddcd"></div>
<div class="a" style="left:1329.5px;top:485.6px;width:1px;height:226.39999999999998px;background:#e1e3e0"></div>
<div class="a" style="left:1422.2px;top:421.6px;width:1px;height:64.0px;background:#d5ddcd"></div>
<div class="a" style="left:1422.2px;top:485.6px;width:1px;height:226.39999999999998px;background:#e1e3e0"></div>
<div class="a" style="left:458.4px;top:504.4px;width:1px;height:36.200000000000045px;background:#e6e6e6"></div>
<div class="a" style="left:526.6px;top:504.4px;width:1px;height:36.200000000000045px;background:#e6e6e6"></div>
<div class="a" style="left:458.4px;top:540.6px;width:1px;height:36.69999999999993px;background:#e6e6e6"></div>
<div class="a" style="left:526.6px;top:540.6px;width:1px;height:36.69999999999993px;background:#e6e6e6"></div>
<div class="a" style="left:458.4px;top:577.3px;width:1px;height:36.60000000000002px;background:#e6e6e6"></div>
<div class="a" style="left:526.6px;top:577.3px;width:1px;height:36.60000000000002px;background:#e6e6e6"></div>
<div class="a" style="left:458.4px;top:633.5px;width:1px;height:36.60000000000002px;background:#e6e6e6"></div>
<div class="a" style="left:526.6px;top:633.5px;width:1px;height:36.60000000000002px;background:#e6e6e6"></div>
<div class="a" style="left:458.4px;top:670.1px;width:1px;height:36.799999999999955px;background:#e6e6e6"></div>
<div class="a" style="left:526.6px;top:670.1px;width:1px;height:36.799999999999955px;background:#e6e6e6"></div>
<div class="a" style="left:458.4px;top:706.9px;width:1px;height:38.10000000000002px;background:#e6e6e6"></div>
<div class="a" style="left:526.6px;top:706.9px;width:1px;height:38.10000000000002px;background:#e6e6e6"></div>
<div class="a" style="left:82.6px;top:425px;font-size:18px;line-height:18px;color:#1c402c;font-weight:700;">2025</div>
<div class="a" style="right:504.90px;top:425px;font-size:18px;line-height:18px;color:#1c402c;font-weight:700;text-align:right;">6 508 936,78</div>
<div class="a" style="right:415.30px;top:425px;font-size:18px;line-height:18px;color:#1c402c;font-weight:700;text-align:right;">9 800,00</div>
<div class="a" style="right:329.50px;top:425px;font-size:18px;line-height:18px;color:#1c402c;font-weight:700;text-align:right;">9 800,00</div>
<div class="a" style="right:207.70px;top:425px;font-size:18px;line-height:18px;color:#1c402c;font-weight:700;text-align:right;">6 499 136,78</div>
<div class="a" style="right:103.30px;top:425px;font-size:18px;line-height:18px;color:#1c402c;font-weight:700;text-align:right;">872 915</div>
<div class="a" style="right:10.70px;top:425px;font-size:18px;line-height:18px;color:#1c402c;font-weight:700;text-align:right;">888 958</div>
<div class="a" style="left:90.5px;top:449px;font-size:14.5px;line-height:14.5px;color:#1c402c;font-weight:700;">Крон-Ц</div>
<div class="a" style="right:503.70px;top:449px;font-size:14.4px;line-height:14.4px;color:#22352a;font-weight:700;text-align:right;">6 508 936,78</div>
<div class="a" style="right:414.10px;top:449px;font-size:14.4px;line-height:14.4px;color:#22352a;font-weight:700;text-align:right;">9 800,00</div>
<div class="a" style="right:328.30px;top:449px;font-size:14.4px;line-height:14.4px;color:#22352a;font-weight:700;text-align:right;">9 800,00</div>
<div class="a" style="right:206.50px;top:449px;font-size:14.4px;line-height:14.4px;color:#22352a;font-weight:700;text-align:right;">6 499 136,78</div>
<div class="a" style="right:102.10px;top:449px;font-size:14.4px;line-height:14.4px;color:#22352a;font-weight:700;text-align:right;">872 915</div>
<div class="a" style="right:9.50px;top:449px;font-size:14.4px;line-height:14.4px;color:#22352a;font-weight:700;text-align:right;">888 958</div>
<div class="a" style="left:99.6px;top:469px;font-size:14.44px;line-height:14.44px;color:#3c3c3c;font-weight:400;">Налоговый орган №1, 123456789,</div>
<div class="a" style="right:503.70px;top:469px;font-size:14.4px;line-height:14.4px;color:#505050;font-weight:400;text-align:right;">6 508 936,78</div>
<div class="a" style="right:414.10px;top:469px;font-size:14.4px;line-height:14.4px;color:#505050;font-weight:400;text-align:right;">9 800,00</div>
<div class="a" style="right:328.30px;top:469px;font-size:14.4px;line-height:14.4px;color:#505050;font-weight:400;text-align:right;">9 800,00</div>
<div class="a" style="right:206.50px;top:469px;font-size:14.4px;line-height:14.4px;color:#505050;font-weight:400;text-align:right;">6 499 136,78</div>
<div class="a" style="right:102.10px;top:469px;font-size:14.4px;line-height:14.4px;color:#505050;font-weight:400;text-align:right;">872 915</div>
<div class="a" style="right:9.50px;top:469px;font-size:14.4px;line-height:14.4px;color:#505050;font-weight:400;text-align:right;">888 958</div>
<div class="a" style="left:108px;top:488px;font-size:14.4px;line-height:14.4px;color:#3c3c3c;font-weight:400;">янв. 2025</div>
<div class="a" style="right:503.70px;top:488px;font-size:14.4px;line-height:14.4px;color:#3c3c3c;font-weight:400;text-align:right;">70 588,24</div>
<div class="a" style="right:206.50px;top:488px;font-size:14.4px;line-height:14.4px;color:#3c3c3c;font-weight:400;text-align:right;">70 588,24</div>
<div class="a" style="right:102.10px;top:488px;font-size:14.4px;line-height:14.4px;color:#3c3c3c;font-weight:400;text-align:right;">9 176</div>
<div class="a" style="right:9.50px;top:488px;font-size:14.4px;line-height:14.4px;color:#3c3c3c;font-weight:400;text-align:right;">9 176</div>
<div class="a" style="left:117.4px;top:508px;font-size:14.4px;line-height:14.4px;color:#3c3c3c;font-weight:400;">Начисление за первую половину месяца</div>
<div class="a" style="left:117.4px;top:524px;font-size:14.4px;line-height:14.4px;color:#3c3c3c;font-weight:400;">0000-000001 от 15.01.2025</div>
<div class="a" style="left:462.5px;top:508px;font-size:14.4px;line-height:14.4px;color:#3c3c3c;font-weight:400;">13-22%</div>
<div class="a" style="left:531px;top:508px;font-size:14.4px;line-height:14.4px;color:#3c3c3c;font-weight:400;">Оплата труда (основная налоговая</div>
<div class="a" style="left:531px;top:524px;font-size:14.4px;line-height:14.4px;color:#3c3c3c;font-weight:400;">база)</div>
<div class="a" style="right:503.70px;top:508px;font-size:14.4px;line-height:14.4px;color:#3c3c3c;font-weight:400;text-align:right;">70 588,24</div>
<div class="a" style="right:206.50px;top:508px;font-size:14.4px;line-height:14.4px;color:#3c3c3c;font-weight:400;text-align:right;">70 588,24</div>
<div class="a" style="right:102.10px;top:508px;font-size:14.4px;line-height:14.4px;color:#3c3c3c;font-weight:400;text-align:right;">9 176</div>
<div class="a" style="left:117.4px;top:544px;font-size:14.4px;line-height:14.4px;color:#3c3c3c;font-weight:400;">Ведомость в банк 0000-000001 от 20.01.2025</div>
<div class="a" style="left:462.5px;top:544px;font-size:14.4px;line-height:14.4px;color:#3c3c3c;font-weight:400;">13-22%</div>
<div class="a" style="left:531px;top:544px;font-size:14.4px;line-height:14.4px;color:#3c3c3c;font-weight:400;">Оплата труда (основная налоговая</div>
<div class="a" style="left:531px;top:561px;font-size:14.4px;line-height:14.4px;color:#3c3c3c;font-weight:400;">база)</div>
<div class="a" style="right:9.50px;top:544px;font-size:14.4px;line-height:14.4px;color:#3c3c3c;font-weight:400;text-align:right;">9 176</div>
<div class="a" style="left:117.4px;top:581px;font-size:14.4px;line-height:14.4px;color:#3c3c3c;font-weight:400;">Начисление зарплаты и взносов 0000-000001 от</div>
<div class="a" style="left:117.4px;top:597px;font-size:14.4px;line-height:14.4px;color:#3c3c3c;font-weight:400;">31.01.2025</div>
<div class="a" style="left:462.5px;top:581px;font-size:14.4px;line-height:14.4px;color:#3c3c3c;font-weight:400;">13-22%</div>
<div class="a" style="left:531px;top:581px;font-size:14.4px;line-height:14.4px;color:#3c3c3c;font-weight:400;">Оплата труда (основная налоговая</div>
<div class="a" style="left:531px;top:597px;font-size:14.4px;line-height:14.4px;color:#3c3c3c;font-weight:400;">база)</div>
<div class="a" style="left:108px;top:617px;font-size:14.4px;line-height:14.4px;color:#3c3c3c;font-weight:400;">февр. 2025</div>
<div class="a" style="right:503.70px;top:617px;font-size:14.4px;line-height:14.4px;color:#3c3c3c;font-weight:400;text-align:right;">234 411,76</div>
<div class="a" style="right:414.10px;top:617px;font-size:14.4px;line-height:14.4px;color:#3c3c3c;font-weight:400;text-align:right;">2 800,00</div>
<div class="a" style="right:328.30px;top:617px;font-size:14.4px;line-height:14.4px;color:#3c3c3c;font-weight:400;text-align:right;">2 800,00</div>
<div class="a" style="right:206.50px;top:617px;font-size:14.4px;line-height:14.4px;color:#3c3c3c;font-weight:400;text-align:right;">231 611,76</div>
<div class="a" style="right:102.10px;top:617px;font-size:14.4px;line-height:14.4px;color:#3c3c3c;font-weight:400;text-align:right;">30 110</div>
<div class="a" style="right:9.50px;top:617px;font-size:14.4px;line-height:14.4px;color:#3c3c3c;font-weight:400;text-align:right;">30 110</div>
<div class="a" style="left:1327.8px;top:668.5px;width:96.7px;height:40.9px;background:#ececec;border:2px solid #f0d77e"></div>
<div class="a" style="left:117.4px;top:637px;font-size:14.4px;line-height:14.4px;color:#3c3c3c;font-weight:400;">Начисление зарплаты и взносов 0000-000001 от</div>
<div class="a" style="left:117.4px;top:654px;font-size:14.4px;line-height:14.4px;color:#3c3c3c;font-weight:400;">31.01.2025</div>
<div class="a" style="left:462.5px;top:637px;font-size:14.4px;line-height:14.4px;color:#3c3c3c;font-weight:400;">13-22%</div>
<div class="a" style="left:531px;top:637px;font-size:14.4px;line-height:14.4px;color:#3c3c3c;font-weight:400;">Оплата труда (основная налоговая</div>
<div class="a" style="left:531px;top:654px;font-size:14.4px;line-height:14.4px;color:#3c3c3c;font-weight:400;">база)</div>
<div class="a" style="right:503.70px;top:637px;font-size:14.4px;line-height:14.4px;color:#3c3c3c;font-weight:400;text-align:right;">234 411,76</div>
<div class="a" style="right:414.10px;top:637px;font-size:14.4px;line-height:14.4px;color:#3c3c3c;font-weight:400;text-align:right;">2 800,00</div>
<div class="a" style="right:328.30px;top:637px;font-size:14.4px;line-height:14.4px;color:#3c3c3c;font-weight:400;text-align:right;">2 800,00</div>
<div class="a" style="right:206.50px;top:637px;font-size:14.4px;line-height:14.4px;color:#3c3c3c;font-weight:400;text-align:right;">231 611,76</div>
<div class="a" style="right:102.10px;top:637px;font-size:14.4px;line-height:14.4px;color:#3c3c3c;font-weight:400;text-align:right;">30 110</div>
<div class="a" style="left:117.4px;top:674px;font-size:14.4px;line-height:14.4px;color:#3c3c3c;font-weight:400;">Ведомость в банк 0000-000002 от 05.02.2025</div>
<div class="a" style="left:462.5px;top:674px;font-size:14.4px;line-height:14.4px;color:#3c3c3c;font-weight:400;">13-22%</div>
<div class="a" style="left:531px;top:674px;font-size:14.4px;line-height:14.4px;color:#3c3c3c;font-weight:400;">Оплата труда (основная налоговая</div>
<div class="a" style="left:531px;top:690px;font-size:14.4px;line-height:14.4px;color:#3c3c3c;font-weight:400;">база)</div>
<div class="a" style="right:9.50px;top:674px;font-size:14.4px;line-height:14.4px;color:#3c3c3c;font-weight:400;text-align:right;">30 110</div>
<div class="a" style="left:117.4px;top:709px;font-size:14.4px;line-height:14.4px;color:#3c3c3c;font-weight:400;">Начисление за первую половину месяца</div>
<div class="a" style="left:117.4px;top:726px;font-size:14.4px;line-height:14.4px;color:#3c3c3c;font-weight:400;">0000-000002 от 15.02.2025</div>
<div class="a" style="left:462.5px;top:709px;font-size:14.4px;line-height:14.4px;color:#3c3c3c;font-weight:400;">13-22%</div>
<div class="a" style="left:531px;top:709px;font-size:14.4px;line-height:14.4px;color:#3c3c3c;font-weight:400;">Оплата труда (основная налоговая</div>
<div class="a" style="left:531px;top:726px;font-size:14.4px;line-height:14.4px;color:#3c3c3c;font-weight:400;">база)</div>
<div class="a" style="right:503.70px;top:709px;font-size:14.4px;line-height:14.4px;color:#3c3c3c;font-weight:400;text-align:right;">158 500,00</div>
<div class="a" style="right:206.50px;top:709px;font-size:14.4px;line-height:14.4px;color:#3c3c3c;font-weight:400;text-align:right;">158 500,00</div>
<div class="a" style="right:102.10px;top:709px;font-size:14.4px;line-height:14.4px;color:#3c3c3c;font-weight:400;text-align:right;">19 005</div>
<div class="a" style="left:14.6px;top:440.5px;width:1px;height:271.5px;background:#dadada"></div>
<div class="a" style="left:8.5px;top:427.4px;width:12.5px;height:13px;background:#fff;border:1px solid #d2d2d2;border-radius:1px"></div>
<div class="a" style="left:10.5px;top:433.4px;width:8.5px;height:1px;background:#c9c9c9"></div>
<div class="a" style="left:28.4px;top:462px;width:1px;height:250px;background:#dadada"></div>
<div class="a" style="left:22.4px;top:449.2px;width:12.5px;height:13px;background:#fff;border:1px solid #d2d2d2;border-radius:1px"></div>
<div class="a" style="left:24.4px;top:455.2px;width:8.5px;height:1px;background:#c9c9c9"></div>
<div class="a" style="left:42.3px;top:481.3px;width:1px;height:230.7px;background:#dadada"></div>
<div class="a" style="left:36.3px;top:468.6px;width:12.5px;height:13px;background:#fff;border:1px solid #d2d2d2;border-radius:1px"></div>
<div class="a" style="left:38.3px;top:474.6px;width:8.5px;height:1px;background:#c9c9c9"></div>
<div class="a" style="left:56.2px;top:501.4px;width:1px;height:112.89999999999998px;background:#dadada"></div>
<div class="a" style="left:56.2px;top:614.3px;width:20.799999999999997px;height:1px;background:#dadada"></div>
<div class="a" style="left:50.2px;top:488.2px;width:12.5px;height:13px;background:#fff;border:1px solid #d2d2d2;border-radius:1px"></div>
<div class="a" style="left:52.2px;top:494.2px;width:8.5px;height:1px;background:#c9c9c9"></div>
<div class="a" style="left:50.3px;top:617.8px;width:12.5px;height:13px;background:#fff;border:1px solid #d2d2d2;border-radius:1px"></div>
<div class="a" style="left:52.3px;top:623.8px;width:8.5px;height:1px;background:#c9c9c9"></div>
<div class="a" style="left:56.2px;top:630.8px;width:1px;height:81.20000000000005px;background:#dadada"></div>
<svg style="left:1333px;top:649px" width="11" height="12"><path d="M2 3 Q2 1 4 1.5 L5 4 Q5.5 1 7.5 1.5 L8 5 Q9.5 3 10.5 5 L9.5 9 Q8 11.5 5 11 Q1.5 10.5 1 7Z" fill="#fff" stroke="#222" stroke-width="1.2"/></svg>
</body></html>
